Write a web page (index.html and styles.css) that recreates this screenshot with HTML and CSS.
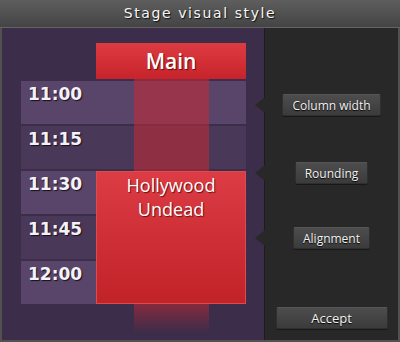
FILE: index.html
```html
<!DOCTYPE html>
<html lang="en">
<head>
    <meta charset="UTF-8">
    <meta name="viewport" content="width=device-width, initial-scale=1.0">
    <title>Stage visual style</title>
    <link rel="stylesheet" href="styles.css">
</head>
<body>
    <div class="window">
        <div class="titlebar">Stage visual style</div>

        <div class="window-body">
            <section class="schedule-panel">
                <div class="schedule">
                    <div class="stage-head">Main</div>
                    <div class="slots">
                        <div class="slot slot-light">11:00</div>
                        <div class="slot slot-dark">11:15</div>
                        <div class="slot slot-light">11:30</div>
                        <div class="slot slot-dark">11:45</div>
                        <div class="slot slot-light">12:00</div>
                    </div>
                    <div class="stage-column"></div>
                    <div class="event">Hollywood<br>Undead</div>
                </div>
            </section>

            <aside class="tools">
                <div class="tool tool-width"><button>Column width</button></div>
                <div class="tool tool-rounding"><button>Rounding</button></div>
                <div class="tool tool-align"><button>Alignment</button></div>
                <div class="accept-row"><button class="accept">Accept</button></div>
            </aside>
        </div>
    </div>
</body>
</html>
```

FILE: styles.css
```css
* {
    margin: 0;
    padding: 0;
    box-sizing: border-box;
}

body {
    background-color: #4f4f4f;
    font-family: 'Open Sans', 'DejaVu Sans', sans-serif;
}

.window {
    width: 400px;
    height: 342px;
    display: flex;
    flex-direction: column;
    background-color: #515151;
}

.titlebar {
    height: 28px;
    line-height: 27px;
    border-bottom: 1px solid #646464;
    background: linear-gradient(to bottom, #5e5e5e, #444444);
    color: #f6f6f6;
    text-align: center;
    font-family: 'DejaVu Sans', sans-serif;
    font-size: 14px;
    letter-spacing: 1.6px;
    text-shadow: 1px 1px 1px #111;
}

.window-body {
    flex: 1;
    display: flex;
    padding: 0 2px 2px;
}

/* schedule preview */
.schedule-panel {
    width: 262px;
    background-color: #3c2d4a;
    padding: 15px 0 0 19px;
}

.schedule {
    position: relative;
    width: 225px;
}

.stage-head {
    margin-left: 75px;
    width: 150px;
    height: 36px;
    margin-bottom: 2px;
    background: linear-gradient(to bottom, #dd3b42, #c8232a);
    color: #fff;
    text-align: center;
    font-size: 21px;
    font-weight: 600;
    line-height: 36px;
    text-shadow: 1px 1px 1px #5a0c10;
}

.slots {
    display: flex;
    flex-direction: column;
    gap: 2px;
}

.slot {
    height: 43px;
    padding: 3px 0 0 7px;
    color: #f4f2f8;
    font-family: 'DejaVu Sans', sans-serif;
    font-weight: bold;
    font-size: 17px;
    line-height: 20px;
    text-shadow: 1px 1px 1px #161019;
}

.slot-light {
    background-color: #59456a;
}

.slot-dark {
    background-color: #4a3858;
}

.stage-column {
    position: absolute;
    left: 113px;
    top: 36px;
    width: 75px;
    height: 254px;
    background: linear-gradient(to bottom, rgba(200, 40, 52, 0.55) 0, rgba(200, 40, 52, 0.55) 88%, rgba(200, 40, 52, 0) 100%);
}

.event {
    position: absolute;
    left: 75px;
    top: 128px;
    width: 150px;
    height: 133px;
    border: 1px solid #dd4a52;
    background: linear-gradient(to bottom, #dc3c44, #c12329);
    color: #fff;
    text-align: center;
    font-size: 18px;
    line-height: 24px;
    padding-top: 1px;
    text-shadow: 1px 1px 1px #6a1016;
}

/* settings column */
.tools {
    flex: 1;
    display: flex;
    flex-direction: column;
    background-color: #282828;
    border-left: 1px solid #1c1c1c;
    padding: 66px 0 11px;
}

.tool {
    position: relative;
    display: flex;
    justify-content: center;
    height: 22px;
}

.tool::before {
    content: '';
    position: absolute;
    left: -10px;
    top: 3px;
    border-right: 10px solid #282828;
    border-top: 8px solid transparent;
    border-bottom: 8px solid transparent;
}

.tool-rounding {
    margin-top: 46px;
}

.tool-align {
    margin-top: 43px;
}

button {
    height: 22px;
    padding: 0 9px;
    background: linear-gradient(to bottom, #4d4d4d, #3b3b3b);
    color: #f2f2f2;
    border: 1px solid #2f2f2f;
    border-top-color: #555;
    border-radius: 2px;
    box-shadow: 0 1px 0 #181818;
    font-family: 'Open Sans', sans-serif;
    font-size: 12px;
    line-height: 19px;
    text-shadow: 0 1px 1px #000;
}

.accept-row {
    margin-top: auto;
    display: flex;
    justify-content: center;
}

.accept {
    width: 112px;
    font-size: 13px;
}
```
